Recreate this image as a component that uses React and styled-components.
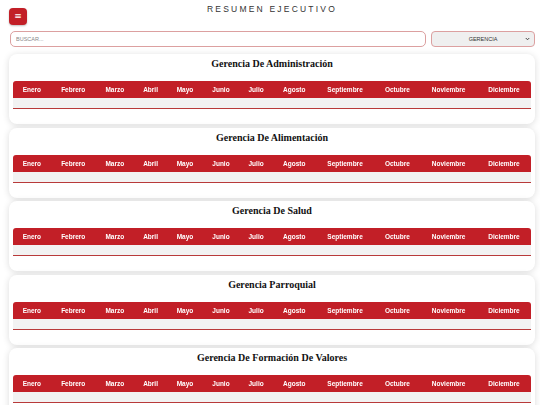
import React from 'react';
import styled, { createGlobalStyle } from 'styled-components';

const GlobalStyle = createGlobalStyle`
  html, body {
    margin: 0;
    padding: 0;
    background: #ffffff;
    font-family: "Liberation Sans", Arial, sans-serif;
    -webkit-font-smoothing: antialiased;
  }
`

const Page = styled.div`
  padding: 4px 5px 0 9px;
`

const TopBar = styled.div`
  display: grid;
  grid-template-columns: 1fr auto 1fr;
  align-items: start;
  height: 27px;
`

const MenuButton = styled.button`
  grid-column: 1;
  justify-self: start;
  margin-top: 4px;
  width: 18px;
  height: 17px;
  padding: 0;
  border: none;
  border-radius: 4px;
  background: #c21f27;
  color: #ffffff;
  font-size: 9px;
  line-height: 17px;
  font-family: "DejaVu Sans", sans-serif;
  box-shadow: 0 1px 2px rgba(0, 0, 0, 0.25);
`

const Title = styled.h1`
  grid-column: 2;
  margin: 0;
  font-size: 8.5px;
  line-height: 10px;
  font-weight: normal;
  letter-spacing: 2.2px;
  color: #333333;
  font-family: "Liberation Sans", Arial, sans-serif;
`

const SearchRow = styled.div`
  display: flex;
  align-items: flex-start;
  gap: 5px;
  padding-left: 1px;
  height: 16px;
  margin-bottom: 7.4px;
`

const SearchInput = styled.input`
  flex: 1;
  box-sizing: border-box;
  display: block;
  margin: 0;
  height: 16px;
  border: 1px solid #dca0a0;
  border-radius: 5px;
  padding: 0 5px;
  font-size: 5.5px;
  color: #555;
  background: #fff;
  outline: none;
  &::placeholder {
    color: #888;
  }
`

const SelectWrap = styled.div`
  position: relative;
  width: 104px;
  height: 16px;
`

const Select = styled.select`
  appearance: none;
  display: block;
  margin: 0;
  width: 100%;
  box-sizing: border-box;
  height: 16px;
  border: 1px solid #dca0a0;
  border-radius: 4px;
  background: #efefef;
  font-family: "Liberation Sans", Arial, sans-serif;
  font-size: 5.5px;
  color: #333;
  text-align: center;
  text-align-last: center;
  padding: 0 3px;
`

const Chevron = styled.svg`
  position: absolute;
  right: 5px;
  top: 6px;
  width: 5px;
  height: 4px;
  pointer-events: none;
`

const Cards = styled.div`
  display: flex;
  flex-direction: column;
  gap: 3.4px;
`

const Card = styled.section`
  background: #ffffff;
  border-radius: 8px;
  box-shadow: 0 1px 7px rgba(0, 0, 0, 0.14);
  padding: 3px 4px 15px 4px;
`

const CardTitle = styled.h2`
  margin: 0 0 10px;
  text-align: center;
  font-family: "Liberation Serif", "Times New Roman", serif;
  font-size: 10px;
  line-height: 14px;
  font-weight: bold;
  color: #111;
`

const Table = styled.table`
  width: 100%;
  border-collapse: collapse;
  will-change: transform;
`

const HeadCell = styled.th`
  background: #c21f27;
  color: #ffffff;
  font-size: 6.5px;
  font-weight: bold;
  height: 17px;
  padding: 0 6px;
  text-align: center;
  white-space: nowrap;
  &:first-child { border-top-left-radius: 3px; }
  &:last-child { border-top-right-radius: 3px; }
`

const BodyCell = styled.td`
  height: 10px;
  padding: 0;
  background: #f2f2f2;
  border-bottom: 1px solid #b83a3a;
`

const months = [
  'Enero', 'Febrero', 'Marzo', 'Abril', 'Mayo', 'Junio',
  'Julio', 'Agosto', 'Septiembre', 'Octubre', 'Noviembre', 'Diciembre'
]

const gerencias = [
  'Gerencia De Administración',
  'Gerencia De Alimentación',
  'Gerencia De Salud',
  'Gerencia Parroquial',
  'Gerencia De Formación De Valores'
]

function GerenciaCard({ name }) {
  return (
    <Card>
      <CardTitle>{name}</CardTitle>
      <Table>
        <thead>
          <tr>
            {months.map(m => <HeadCell key={m}>{m}</HeadCell>)}
          </tr>
        </thead>
        <tbody>
          <tr>
            {months.map(m => <BodyCell key={m} />)}
          </tr>
        </tbody>
      </Table>
    </Card>
  );
}

export default function App() {
  return (
    <>
      <GlobalStyle />
      <Page>
        <TopBar>
          <MenuButton>≡</MenuButton>
          <Title>RESUMEN EJECUTIVO</Title>
        </TopBar>
        <SearchRow>
          <SearchInput placeholder="BUSCAR..." />
          <SelectWrap>
            <Select defaultValue="">
              <option value="">GERENCIA</option>
            </Select>
            <Chevron viewBox="0 0 10 8">
              <path d="M1.5 2 L5 5.5 L8.5 2" fill="none" stroke="#333" strokeWidth="1.8" />
            </Chevron>
          </SelectWrap>
        </SearchRow>
        <Cards>
          {gerencias.map(g => <GerenciaCard key={g} name={g} />)}
        </Cards>
      </Page>
    </>
  );
}
